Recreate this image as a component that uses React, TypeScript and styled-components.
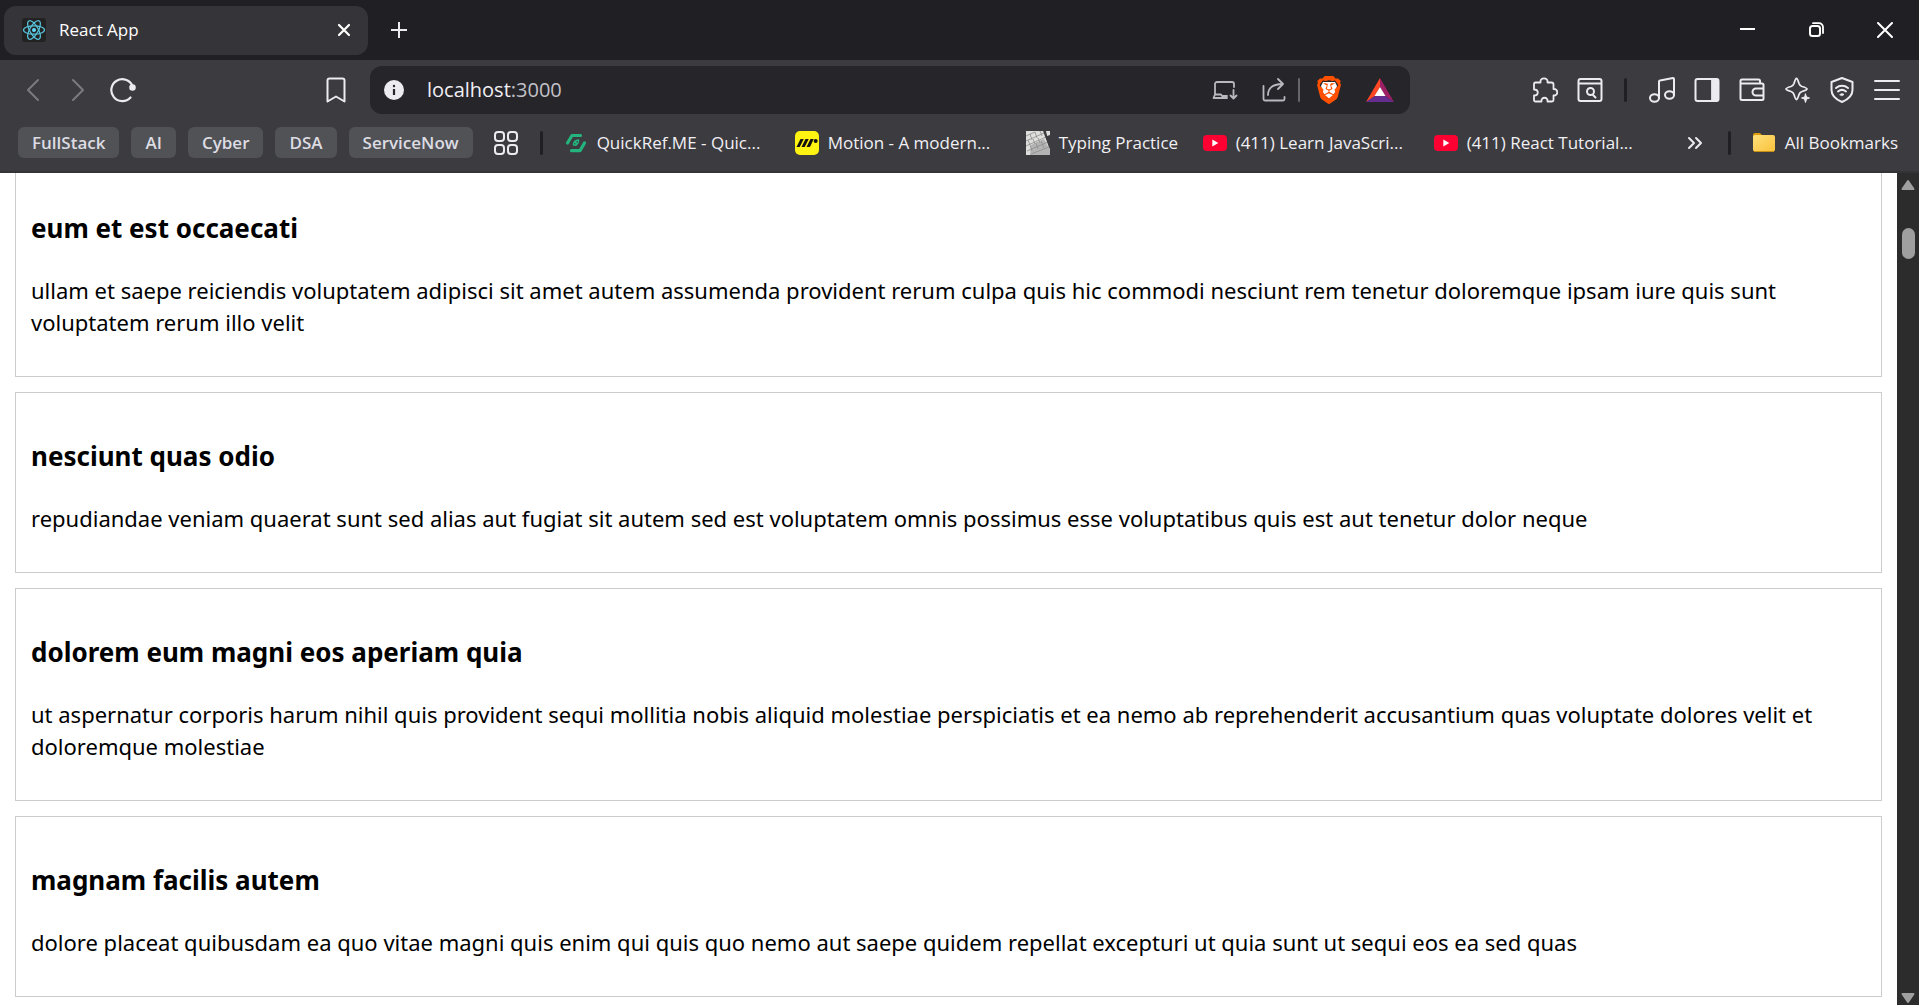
import React, { useLayoutEffect, useRef } from "react";
import styled, { createGlobalStyle } from "styled-components";
import { SiBrave } from "react-icons/si";

const colors = {
  strip: "#201f24",
  tab: "#353438",
  bar: "#3c3b3f",
  field: "#26252a",
  pill: "#515256",
  icon: "#ecebf0",
  dim: "#7b7a7f",
  text: "#f1f0f4",
};

const GlobalStyle = createGlobalStyle`
  *, *::before, *::after { box-sizing: border-box; }
  body { margin: 0; font-family: "Segoe UI", "Open Sans", "Noto Sans", sans-serif; }
  button, input { font: inherit; }
`;

const Window = styled.div`
  display: flex;
  flex-direction: column;
  height: 100vh;
  overflow: hidden;
  background: #fff;
`;

const TabStrip = styled.header`
  flex: none;
  display: flex;
  align-items: center;
  height: 60px;
  padding: 0 0 0 4px;
  background: ${colors.strip};
`;

const Tab = styled.div`
  display: flex;
  align-items: center;
  gap: 13px;
  width: 364px;
  height: 49px;
  padding: 0 8px 0 18px;
  border-radius: 12px;
  background: ${colors.tab};
  color: #fff;
`;

const TabTitle = styled.span`
  flex: 1;
  font-size: 17px;
  line-height: 24px;
`;

const IconButton = styled.button<{ $width?: number; $height?: number; $color?: string }>`
  flex: none;
  display: flex;
  align-items: center;
  justify-content: center;
  width: ${(p) => p.$width ?? 45}px;
  height: ${(p) => p.$height ?? 36}px;
  padding: 0;
  border: 0;
  background: transparent;
  color: ${(p) => p.$color ?? colors.icon};

  svg {
    flex: none;
    display: block;
  }
`;

const NewTab = styled(IconButton)`
  margin-left: 8px;
`;

const WindowControls = styled.div`
  display: flex;
  margin-left: auto;
`;

const Toolbar = styled.nav`
  flex: none;
  display: flex;
  align-items: center;
  height: 60px;
  padding: 0 10px;
  background: ${colors.bar};
`;

const Spacer = styled.div<{ $grow: number }>`
  flex: ${(p) => p.$grow} 1 0;
`;

const AddressBar = styled.div`
  flex: 1040 1 0;
  display: flex;
  align-items: center;
  height: 48px;
  margin-left: 12px;
  border-radius: 12px;
  background: ${colors.field};
`;

const Address = styled.p`
  flex: 1;
  margin: 0 0 0 9px;
  font-size: 20px;
  line-height: 28px;
  color: ${colors.text};
`;

const Port = styled.span`
  color: #c3c2c8;
`;

const Divider = styled.span<{ $light?: boolean }>`
  flex: none;
  width: ${(p) => (p.$light ? 2 : 3)}px;
  height: 24px;
  border-radius: 2px;
  background: ${(p) => (p.$light ? "#67666b" : colors.strip)};
`;

const ToolbarDivider = styled(Divider)`
  margin: 0 12px;
`;

const BookmarksBar = styled.nav`
  flex: none;
  display: flex;
  align-items: center;
  height: 53px;
  padding: 0 21px 6px 18px;
  border-bottom: 2px solid #343337;
  background: ${colors.bar};
`;

const Folders = styled.div`
  display: flex;
  gap: 12px;
`;

const FolderPill = styled.button`
  height: 31px;
  padding: 0 14px;
  border: 0;
  border-radius: 6px;
  background: ${colors.pill};
  color: #dddce3;
  font-size: 17px;
  font-weight: 600;
  line-height: 31px;
`;

const Links = styled.div`
  display: flex;
  gap: 24px;
  margin-left: 21px;
`;

const Bookmark = styled.a<{ $width?: number }>`
  flex: none;
  display: flex;
  align-items: center;
  gap: 9px;
  width: ${(p) => (p.$width ? `${p.$width}px` : "auto")};
  color: ${colors.text};
  font-size: 17px;
  line-height: 24px;
  white-space: nowrap;
  text-decoration: none;

  svg {
    flex: none;
    display: block;
  }
`;

const BookmarksEnd = styled.div`
  display: flex;
  align-items: center;
  margin-left: auto;
`;

const EndDivider = styled(Divider)`
  margin: 0 21px 0 10px;
`;

const Page = styled.div`
  flex: 1;
  min-height: 0;
  display: flex;
`;

const Viewport = styled.main`
  flex: 1;
  min-width: 0;
  overflow: hidden;
`;

const PostList = styled.div`
  display: flex;
  flex-direction: column;
  gap: 15px;
  padding: 15px;
`;

const Card = styled.article`
  padding: 45px 15px 38px;
  border: 1px solid #ccc;
  font-family: "Segoe UI", "Noto Sans", "Open Sans", sans-serif;
  color: #000;
`;

const CardTitle = styled.h3`
  margin: 0 0 27px;
  font-size: 26px;
  font-weight: 700;
  line-height: 37px;
`;

const CardBody = styled.p`
  margin: 0;
  font-size: 22px;
  line-height: 32px;
`;

const Scrollbar = styled.div`
  flex: none;
  display: flex;
  flex-direction: column;
  width: 22px;
  background: #2c2c2c;
`;

const Track = styled.div`
  flex: 1;
  padding: 31px 4px 0 5px;
`;

const Thumb = styled.div`
  height: 31px;
  border-radius: 7px;
  background: #9f9f9f;
`;

const line = {
  fill: "none",
  stroke: "currentColor",
  strokeWidth: 2,
  strokeLinecap: "round" as const,
  strokeLinejoin: "round" as const,
};

function Icon({ size = 26, height, children }: { size?: number; height?: number; children: React.ReactNode }) {
  return (
    <svg width={size} height={height ?? size} viewBox={`0 0 ${size} ${height ?? size}`} aria-hidden="true" {...line}>
      {children}
    </svg>
  );
}

const ReactLogo = () => (
  <svg width="24" height="24" viewBox="0 0 24 24" aria-hidden="true">
    <rect width="24" height="24" rx="3" fill="#222" />
    <g fill="none" stroke="#58c4dc" strokeWidth="1.2">
      <ellipse cx="12" cy="12" rx="10.5" ry="4.2" />
      <ellipse cx="12" cy="12" rx="10.5" ry="4.2" transform="rotate(60 12 12)" />
      <ellipse cx="12" cy="12" rx="10.5" ry="4.2" transform="rotate(120 12 12)" />
    </g>
    <circle cx="12" cy="12" r="2" fill="#61dafb" />
  </svg>
);

const BraveLogo = () => (
  <svg width="28" height="28" viewBox="0 0 28 28" aria-hidden="true">
    <path d="M8 6h12l2 4-3 9-5 4-5-4L6 10z" fill="#fff" />
    <SiBrave x="0" y="0" size={28} color="#ff5000" />
  </svg>
);

const BatLogo = () => (
  <svg width="28" height="24" viewBox="0 0 28 24" aria-hidden="true">
    <path d="M14 0 0 24l9-6 5-9z" fill="#ff4724" />
    <path d="M14 0l14 24-9-6-5-9z" fill="#9e1f63" />
    <path d="M0 24h28l-9-6H9z" fill="#662d91" />
    <path d="M14 9l5.500 9h-11z" fill="#fff" />
  </svg>
);

const QuickRefLogo = () => (
  <svg width="24" height="24" viewBox="0 0 24 24" aria-hidden="true" fill="none" stroke="#24b47e">
    <path d="M3.500 12 8 4.500h8.500" strokeWidth="3.200" strokeLinejoin="round" strokeLinecap="round" />
    <path d="M20.500 12 16 19.700H7.500" strokeWidth="3.200" strokeLinejoin="round" strokeLinecap="round" />
    <path d="M9.500 14c-.5-3 2-5 5-5 .5 3-1.500 5.500-5 5zM12 10v5M10 11l4 2" strokeWidth="1.400" />
  </svg>
);

const MotionLogo = () => (
  <svg width="24" height="24" viewBox="0 0 24 24" aria-hidden="true">
    <rect width="24" height="24" rx="5" fill="#fff312" />
    <path d="M1.500 16 5.500 8h3.200l-4 8zM6.500 16l4-8h3.200l-4 8zM11.500 16l4-8h3.200l-3 6.500c-.5 1-1 1.500-2 1.500z" fill="#111" />
    <circle cx="20.700" cy="10" r="2" fill="#111" />
  </svg>
);

const TypingLogo = () => (
  <svg width="24" height="24" viewBox="0 0 24 24" aria-hidden="true">
    <path d="M0 0h18l6 19v5H0z" fill="#dededc" />
    <path d="M5 14l13-6 6 11v5H4z" fill="#b4b4b4" />
    <path d="M20 0h4v4l-3 1z" fill="#dededc" />
    <path d="M0 5l9-4M0 10l18-8M0 15l20-9M1 20l21-9M5 23l18-7M4 3l2 6M9 1l2 6M14 0l2 5M2 9l2 5M7 8l2 5M12 7l2 5M4 14l2 6M10 12l2 6M15 10l3 7" stroke="#8d8d8d" strokeWidth=".8" fill="none" />
    <path d="M18 0l6 16" stroke="#3c3b3f" strokeWidth="2" />
  </svg>
);

const YouTubeLogo = () => (
  <svg width="24" height="24" viewBox="0 0 24 24" aria-hidden="true">
    <rect y="4" width="24" height="16" rx="4" fill="#ff0033" />
    <path d="M9.300 8.500v7l6-3.500z" fill="#fff" />
  </svg>
);

const FolderLogo = () => (
  <svg width="24" height="24" viewBox="0 0 24 24" aria-hidden="true">
    <defs>
      <linearGradient id="folder" x1="0" y1="0" x2="1" y2="1">
        <stop offset="0" stopColor="#ffe07a" />
        <stop offset="1" stopColor="#f9c23c" />
      </linearGradient>
    </defs>
    <path d="M1 4a2 2 0 0 1 2-2h5l3 3v4H1z" fill="#d99a0b" />
    <rect x="1" y="4" width="22" height="16.500" rx="2" fill="url(#folder)" />
    <path d="M2 20.500h20" stroke="#c98e14" />
  </svg>
);

const folders = ["FullStack", "AI", "Cyber", "DSA", "ServiceNow"];

const bookmarks = [
  { title: "QuickRef.ME - Quic...", logo: <QuickRefLogo />, width: 207 },
  { title: "Motion - A modern...", logo: <MotionLogo />, width: 207 },
  { title: "Typing Practice", logo: <TypingLogo />, width: 153 },
  { title: "(411) Learn JavaScri...", logo: <YouTubeLogo />, width: 207 },
  { title: "(411) React Tutorial...", logo: <YouTubeLogo />, width: 207 },
];

const posts = [
  {
    title: "eum et est occaecati",
    body: "ullam et saepe reiciendis voluptatem adipisci sit amet autem assumenda provident rerum culpa quis hic commodi nesciunt rem tenetur doloremque ipsam iure quis sunt voluptatem rerum illo velit",
  },
  {
    title: "nesciunt quas odio",
    body: "repudiandae veniam quaerat sunt sed alias aut fugiat sit autem sed est voluptatem omnis possimus esse voluptatibus quis est aut tenetur dolor neque",
  },
  {
    title: "dolorem eum magni eos aperiam quia",
    body: "ut aspernatur corporis harum nihil quis provident sequi mollitia nobis aliquid molestiae perspiciatis et ea nemo ab reprehenderit accusantium quas voluptate dolores velit et doloremque molestiae",
  },
  {
    title: "magnam facilis autem",
    body: "dolore placeat quibusdam ea quo vitae magni quis enim qui quis quo nemo aut saepe quidem repellat excepturi ut quia sunt ut sequi eos ea sed quas",
  },
];

function TitleBar() {
  return (
    <TabStrip>
      <Tab>
        <ReactLogo />
        <TabTitle>React App</TabTitle>
        <IconButton $width={32} $color="#fff" aria-label="Close tab">
          <Icon size={14}><path d="M2 2l10 10M12 2 2 12" strokeWidth="2.200" /></Icon>
        </IconButton>
      </Tab>
      <NewTab aria-label="New tab">
        <Icon size={16}><path d="M8 0v16M0 8h16" strokeLinecap="butt" /></Icon>
      </NewTab>
      <WindowControls>
        <IconButton $width={69} $height={60} $color="#fff" aria-label="Minimize">
          <Icon size={16}><path d="M1 7h15" strokeLinecap="butt" /></Icon>
        </IconButton>
        <IconButton $width={69} $height={60} $color="#fff" aria-label="Restore">
          <Icon size={16}>
            <rect x="2" y="4" width="10" height="10" rx="2.500" />
            <path d="M5 1.200h6a4 4 0 0 1 4 4V11" strokeWidth="1.800" />
          </Icon>
        </IconButton>
        <IconButton $width={69} $height={60} $color="#fff" aria-label="Close window">
          <Icon size={16}><path d="M1 1l14 14M15 1 1 15" /></Icon>
        </IconButton>
      </WindowControls>
    </TabStrip>
  );
}

function NavigationBar() {
  return (
    <Toolbar aria-label="Navigation">
      <IconButton $color={colors.dim} aria-label="Back">
        <Icon size={24}><path d="M17 2 7 12l10 10" /></Icon>
      </IconButton>
      <IconButton $color={colors.dim} aria-label="Forward">
        <Icon size={24}><path d="M7 2l10 10L7 22" /></Icon>
      </IconButton>
      <IconButton aria-label="Reload">
        <Icon size={26}>
          <path d="M20.500 20.500A11 11 0 1 1 22.500 9" strokeWidth="2.200" />
          <circle cx="22.500" cy="10.500" r="2.300" fill="currentColor" />
        </Icon>
      </IconButton>
      <Spacer $grow={168} />
      <IconButton aria-label="Bookmark this page">
        <Icon size={26}><path d="M4.500 3.500a2 2 0 0 1 2-2h13a2 2 0 0 1 2 2v21L13 19.500l-8.500 5z" /></Icon>
      </IconButton>
      <AddressBar>
        <IconButton $width={48} aria-label="Site information">
          <Icon size={20}>
            <circle cx="10" cy="10" r="10" fill="currentColor" stroke="none" />
            <path d="M10 9v6" stroke={colors.field} strokeLinecap="butt" strokeWidth="2.200" />
            <circle cx="10" cy="6" r="1.200" fill={colors.field} stroke="none" />
          </Icon>
        </IconButton>
        <Address>
          localhost<Port>:3000</Port>
        </Address>
        <IconButton $width={51} $color="#b9b8be" aria-label="Install app">
          <Icon size={26} height={20}>
            <path d="M3 14.500V4a2 2 0 0 1 2-2h15a2 2 0 0 1 2 2v3M3 14.500 1.500 18H15M4 14.500h5l1 1.500h5M21.500 10v8M18.500 15.500l3 3 3-3" strokeWidth="1.800" />
          </Icon>
        </IconButton>
        <IconButton $width={48} $color="#b9b8be" aria-label="Share">
          <Icon size={24}>
            <path d="M1.500 8v13a1.500 1.500 0 0 0 1.500 1.500h18a1.500 1.500 0 0 0 1.500-1.500v-2M6 17C6 10 11 6 21 6M16 1l5 5-5 5" strokeWidth="1.800" />
          </Icon>
        </IconButton>
        <Divider $light />
        <IconButton $width={57} aria-label="Brave Shields"><BraveLogo /></IconButton>
        <IconButton $width={45} aria-label="Brave Rewards"><BatLogo /></IconButton>
        <Spacer $grow={0}><IconGap /></Spacer>
      </AddressBar>
      <Spacer $grow={112} />
      <IconButton aria-label="Extensions">
        <Icon size={26}>
          <path d="M3.500 5.500H8.500C7.500 0 16.500 0 15.500 5.500h4a2 2 0 0 1 2 2V12c5-.5 5 7 0 6.500v4.500a1.500 1.500 0 0 1-1.500 1.500h-4.500c.5-5-6.500-5-6 0h-6A1.500 1.500 0 0 1 2 23v-4.500c5 0 5-6 0-6V7a1.500 1.500 0 0 1 1.500-1.500z" strokeWidth="1.800" />
        </Icon>
      </IconButton>
      <IconButton aria-label="Search tabs">
        <Icon size={26}>
          <rect x="1.500" y="2" width="23" height="22" rx="2" />
          <path d="M2 6.500h22M16 18l2.500 2.500" />
          <circle cx="13.500" cy="14.500" r="3.500" />
        </Icon>
      </IconButton>
      <ToolbarDivider />
      <IconButton aria-label="Playlist">
        <Icon size={28}>
          <path d="M11 22V5.500a1 1 0 0 1 1-1l13-2.500a1 1 0 0 1 1 1V19" />
          <ellipse cx="6.500" cy="22" rx="4.500" ry="3.700" />
          <ellipse cx="21.500" cy="19" rx="4.500" ry="3.700" />
        </Icon>
      </IconButton>
      <IconButton aria-label="Side panel">
        <Icon size={26}>
          <rect x="1.500" y="2" width="23" height="22" rx="2" />
          <path d="M18 2h5a1.500 1.500 0 0 1 1.500 1.500v19A1.500 1.500 0 0 1 23 24h-5z" fill="currentColor" strokeWidth="1" />
        </Icon>
      </IconButton>
      <IconButton aria-label="Wallet">
        <Icon size={26}>
          <path d="M21 6.500V4a1.500 1.500 0 0 0-1.500-1.500H3A1.500 1.500 0 0 0 1.500 4v17.500A1.500 1.500 0 0 0 3 23h20a1.500 1.500 0 0 0 1.500-1.500V8A1.500 1.500 0 0 0 23 6.500H2" />
          <path d="M24 11.500h-7a3.300 3.300 0 0 0 0 7h7" />
        </Icon>
      </IconButton>
      <IconButton aria-label="Leo AI">
        <Icon size={26}>
          <path d="M12.500 1.500c.8 0 1.300 1 2.500 5 .5 1.500 1.500 2.500 3 3 4 1.200 5 1.700 5 2.500s-1 1.300-5 2.500c-1.500.5-2.500 1.500-3 3-1.200 4-1.700 5-2.500 5s-1.300-1-2.500-5c-.5-1.500-1.500-2.500-3-3-4-1.200-5-1.700-5-2.500s1-1.300 5-2.500c1.500-.5 2.500-1.500 3-3 1.200-4 1.700-5 2.500-5z" strokeWidth="1.800" />
          <path d="M21.500 17l1 3 3 1-3 1-1 3.500-1-3.500-3-1 3-1z" fill="currentColor" strokeWidth="1" />
        </Icon>
      </IconButton>
      <IconButton aria-label="VPN">
        <Icon size={26}>
          <path d="M13 1l10.500 4v8c0 6-4.500 9.500-10.500 12C7 22.500 2.500 19 2.500 13V5z" />
          <path d="M7 11c3.500-3 8.500-3 12 0M9 14.500c2.500-2 5.500-2 8 0" />
          <path d="M11 17.500c1.500-1 2.500-1 4 0l-2 1z" fill="currentColor" strokeWidth="1" />
        </Icon>
      </IconButton>
      <IconButton aria-label="Menu">
        <Icon size={26}><path d="M1 4h24M1 13h24M1 22h24" /></Icon>
      </IconButton>
    </Toolbar>
  );
}

const IconGap = styled.div`
  width: 8px;
`;

function Bookmarks() {
  return (
    <BookmarksBar aria-label="Bookmarks">
      <Folders>
        {folders.map((name) => (
          <FolderPill key={name}>{name}</FolderPill>
        ))}
      </Folders>
      <IconButton $width={67} aria-label="Tab groups">
        <Icon size={26}>
          <rect x="2" y="2" width="9" height="9" rx="3" />
          <rect x="15" y="2" width="9" height="9" rx="3" />
          <rect x="2" y="15" width="9" height="9" rx="3" />
          <rect x="15" y="15" width="9" height="9" rx="3" />
        </Icon>
      </IconButton>
      <Divider />
      <Links>
        {bookmarks.map(({ title, logo, width }) => (
          <Bookmark key={title} href="#" $width={width}>
            {logo}
            {title}
          </Bookmark>
        ))}
      </Links>
      <BookmarksEnd>
        <IconButton aria-label="More bookmarks">
          <Icon size={16}><path d="M2 3l5 5-5 5M9 3l5 5-5 5" /></Icon>
        </IconButton>
        <EndDivider />
        <Bookmark href="#">
          <FolderLogo />
          All Bookmarks
        </Bookmark>
      </BookmarksEnd>
    </BookmarksBar>
  );
}

export default function App() {
  const viewport = useRef<HTMLElement>(null);

  useLayoutEffect(() => {
    if (viewport.current) viewport.current.scrollTop = 24;
  }, []);

  return (
    <>
      <GlobalStyle />
      <Window>
        <TitleBar />
        <NavigationBar />
        <Bookmarks />
        <Page>
          <Viewport ref={viewport}>
            <PostList>
              {posts.map((post) => (
                <Card key={post.title}>
                  <CardTitle>{post.title}</CardTitle>
                  <CardBody>{post.body}</CardBody>
                </Card>
              ))}
            </PostList>
          </Viewport>
          <Scrollbar>
            <IconButton $width={22} $height={24} $color="#9f9f9f" aria-label="Scroll up">
              <Icon size={16} height={12}><path d="M8 2l5.500 8h-11z" fill="currentColor" /></Icon>
            </IconButton>
            <Track>
              <Thumb />
            </Track>
            <IconButton $width={22} $height={15} $color="#9f9f9f" aria-label="Scroll down">
              <Icon size={16} height={12}><path d="M8 10l5.500-8h-11z" fill="currentColor" /></Icon>
            </IconButton>
          </Scrollbar>
        </Page>
      </Window>
    </>
  );
}
